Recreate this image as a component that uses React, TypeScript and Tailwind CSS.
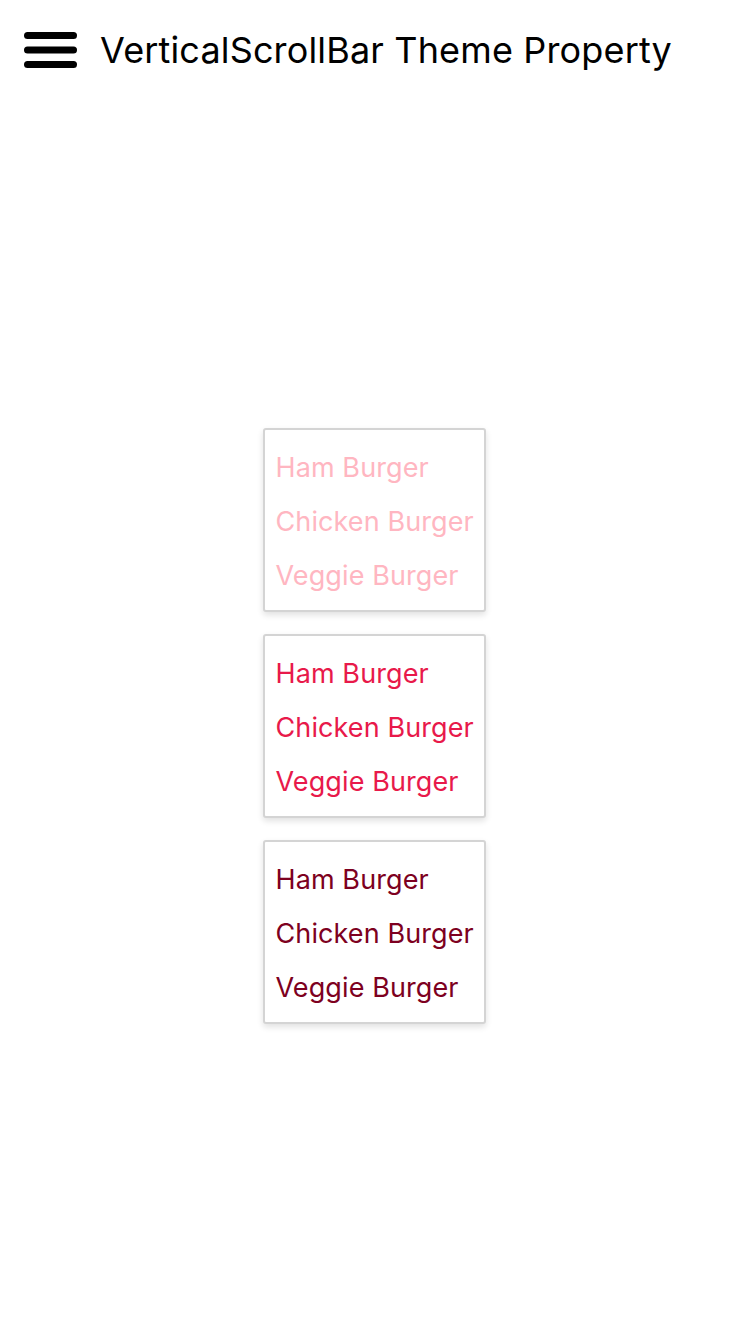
import React from "react";

const items = ["Ham Burger", "Chicken Burger", "Veggie Burger"];

function Box({ color }: { color: string }) {
  return (
    <div className="w-[223px] border-2 border-[#d4d4d4] rounded-[3px] bg-white shadow-[0_3px_6px_rgba(0,0,0,0.12)] pt-[10px] pb-[8px] pl-[11px]">
      {items.map((t) => (
        <div key={t} className={`h-[54px] flex items-center text-[27px] leading-none tracking-[0.1px] ${color}`}>
          {t}
        </div>
      ))}
    </div>
  );
}

export default function App() {
  return (
    <div className="w-[750px] h-[1334px] bg-white" style={{ fontFamily: "Inter, 'Noto Sans', sans-serif" }}>
      <div className="h-[100px] flex items-center pl-[24px]">
        <svg width="53" height="40" viewBox="0 0 53 40" className="shrink-0">
          <line x1="3.5" y1="5.5" x2="49.5" y2="5.5" stroke="black" strokeWidth="7" strokeLinecap="round" />
          <line x1="3.5" y1="20" x2="49.5" y2="20" stroke="black" strokeWidth="7" strokeLinecap="round" />
          <line x1="3.5" y1="34.5" x2="49.5" y2="34.5" stroke="black" strokeWidth="7" strokeLinecap="round" />
        </svg>
        <div className="ml-[23px] text-[36px] text-black leading-none tracking-[0.15px]">VerticalScrollBar Theme Property</div>
      </div>
      <div className="mt-[328px] flex flex-col items-center gap-[22px] pr-[2px]">
        <Box color="text-[#ffb6c1]" />
        <Box color="text-[#e8194a]" />
        <Box color="text-[#7d0020]" />
      </div>
    </div>
  );
}
